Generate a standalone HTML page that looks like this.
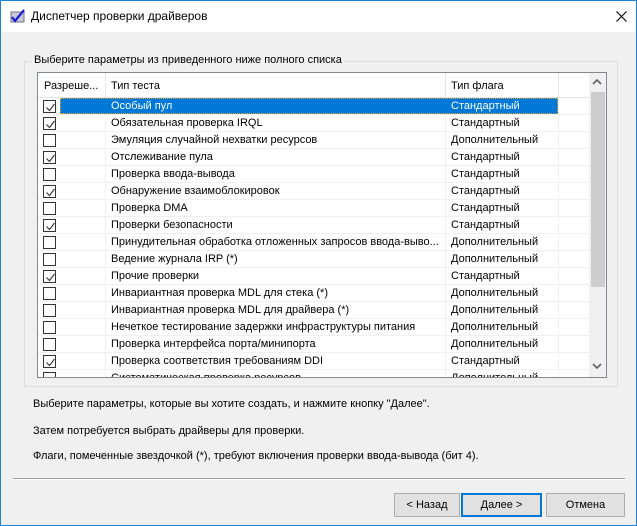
<!DOCTYPE html>
<html><head><meta charset="utf-8"><style>
*{box-sizing:border-box;margin:0;padding:0}
body{width:637px;height:526px;overflow:hidden;font-family:"Liberation Sans","Noto Sans CJK SC",sans-serif;font-size:11px;color:#000;background:#f0f0f0}
.win{position:absolute;left:0;top:0;width:637px;height:526px;border:1px solid #1883d7;background:#f0f0f0}
.title{position:absolute;left:0;top:0;width:635px;height:31px;background:#fff}
.abs{position:absolute;white-space:nowrap}
.gb{position:absolute;left:23px;top:60px;width:594px;height:326px;border:1px solid #dcdcdc}
.lb{position:absolute;left:36px;top:71px;width:570px;height:306px;border:1px solid #828790;background:#fff;overflow:hidden}
.row{position:absolute;left:0;height:17px;width:551px;border-bottom:1px solid #f0f0f0}
.cb{position:absolute;left:5px;top:2px;width:13px;height:13px;border:1px solid #333;background:#fff}
.cb svg{position:absolute;left:1px;top:1px}
.c1{position:absolute;left:73px;top:2px;width:330px;overflow:hidden}
.c2{position:absolute;left:413px;top:2px}
.vl{position:absolute;top:0;width:1px;height:306px;background:#f0f0f0}
.btn{position:absolute;top:492px;height:24px;border:1px solid #adadad;background:#e1e1e1;text-align:center;line-height:22px}
</style></head><body><div class="win">
<div class="title">
<svg class="abs" style="left:9px;top:8px" width="16" height="15" viewBox="0 0 16 15"><rect x="1" y="3" width="13" height="10" fill="#c8c8d8" stroke="#707080"/><path d="M2 8 L5 12 L14 1" stroke="#1a1ad0" stroke-width="2.2" fill="none"/></svg>
<div class="abs" style="left:30px;top:8px;font-size:12px">Диспетчер проверки драйверов</div>
<svg class="abs" style="left:615px;top:10px" width="11" height="11"><path d="M0.5 0.5L10.5 10.5M10.5 0.5L0.5 10.5" stroke="#000" stroke-width="1.1"/></svg>
</div>
<div class="gb"></div>
<div class="abs" style="left:31px;top:53px;background:#f0f0f0;padding:0 2px">Выберите параметры из приведенного ниже полного списка</div>
<div class="lb">
<div class="vl" style="left:67px"></div><div class="vl" style="left:407px"></div><div class="vl" style="left:520px"></div>
<div class="abs" style="left:0;top:0;width:551px;height:25px;background:#fff;border-bottom:1px solid #e5e5e5"></div>
<div class="abs" style="left:6px;top:7px">Разреше...</div>
<div class="abs" style="left:73px;top:7px">Тип теста</div>
<div class="abs" style="left:413px;top:7px">Тип флага</div>
<div class="abs" style="left:67px;top:0;width:1px;height:25px;background:#e5e5e5"></div>
<div class="abs" style="left:407px;top:0;width:1px;height:25px;background:#e5e5e5"></div>
<div class="abs" style="left:520px;top:0;width:1px;height:25px;background:#e5e5e5"></div>
<div id="rows"></div>
<div class="abs" style="left:551px;top:0;width:17px;height:304px;background:#f0f0f0"></div>
<div class="abs" style="left:553px;top:19px;width:14px;height:195px;background:#cdcdcd"></div>
<svg class="abs" style="left:554px;top:6px" width="10" height="7"><path d="M1 5L5 1L9 5" stroke="#606060" stroke-width="1.6" fill="none"/></svg>
<svg class="abs" style="left:554px;top:290px" width="10" height="7"><path d="M1 1L5 5L9 1" stroke="#606060" stroke-width="1.6" fill="none"/></svg>
</div>
<div class="abs" style="left:32px;top:397px">Выберите параметры, которые вы хотите создать, и нажмите кнопку "Далее".</div>
<div class="abs" style="left:32px;top:424px">Затем потребуется выбрать драйверы для проверки.</div>
<div class="abs" style="left:32px;top:449px">Флаги, помеченные звездочкой (*), требуют включения проверки ввода-вывода (бит 4).</div>
<div class="abs" style="left:12px;top:477px;width:612px;height:1px;background:#a0a0a0"></div>
<div class="abs" style="left:12px;top:478px;width:612px;height:1px;background:#fff"></div>
<div class="btn" style="left:393px;width:66px">&lt; Назад</div>
<div class="btn" style="left:460px;width:81px;border:2px solid #0078d7;line-height:20px">Далее &gt;</div>
<div class="btn" style="left:545px;width:79px">Отмена</div>
</div>
<script>
var d=[[1,"Особый пул","Стандартный"],[1,"Обязательная проверка IRQL","Стандартный"],[0,"Эмуляция случайной нехватки ресурсов","Дополнительный"],[1,"Отслеживание пула","Стандартный"],[0,"Проверка ввода-вывода","Стандартный"],[1,"Обнаружение взаимоблокировок","Стандартный"],[0,"Проверка DMA","Стандартный"],[1,"Проверки безопасности","Стандартный"],[0,"Принудительная обработка отложенных запросов ввода-выво...","Дополнительный"],[0,"Ведение журнала IRP (*)","Дополнительный"],[1,"Прочие проверки","Стандартный"],[0,"Инвариантная проверка MDL для стека (*)","Дополнительный"],[0,"Инвариантная проверка MDL для драйвера (*)","Дополнительный"],[0,"Нечеткое тестирование задержки инфраструктуры питания","Дополнительный"],[0,"Проверка интерфейса порта/минипорта","Дополнительный"],[1,"Проверка соответствия требованиям DDI","Стандартный"],[0,"Систематическая проверка ресурсов","Дополнительный"]];
var h="";
d.forEach(function(r,i){var t=25+i*17;var ck=r[0]?'<svg width="11" height="11"><path d="M1.5 5.5L4.5 8.5L9.5 2" stroke="#333" stroke-width="1.1" fill="none"/></svg>':'';
var sel=i==0;
h+='<div class="row" style="top:'+t+'px">'+(sel?'<div class="abs" style="left:22px;top:0;width:498px;height:16px;background:#0078d7;outline:1px dotted #f0a030;outline-offset:-1px"></div>':'')+'<div class="cb">'+ck+'</div><div class="c1" style="'+(sel?'color:#fff':'')+'">'+r[1]+'</div><div class="c2" style="'+(sel?'color:#fff':'')+'">'+r[2]+'</div></div>';});
document.getElementById("rows").innerHTML=h;
</script>
</body></html>
